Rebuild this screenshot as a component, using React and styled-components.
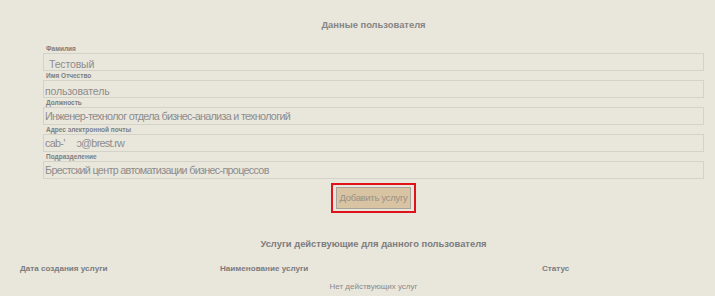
import React from "react";
import styled, { createGlobalStyle } from "styled-components";

const Global = createGlobalStyle`
  html, body { margin: 0; padding: 0; background: #e9e6dc; }
  body { font-family: "Liberation Sans", Arial, sans-serif; color: #8a8a8a; }
`;

const Page = styled.div`
  width: 715px;
  height: 296px;
  overflow: hidden;
  background: #e9e6dc;
`;

const Form = styled.div`
  margin-left: 43px;
  width: 661px;
  display: flex;
  flex-direction: column;
  padding-top: 19px;
`;

const Title = styled.div`
  text-align: center;
  font-weight: bold;
  font-size: 9.4px;
  line-height: 11px;
  color: #858585;
  margin-bottom: ${(p) => p.$mb || 0}px;
`;

const Field = styled.div`
  display: flex;
  flex-direction: column;
`;

const Label = styled.div`
  font-size: 6.5px;
  font-weight: bold;
  line-height: 9px;
  height: 9px;
  color: #7e7e7e;
  padding-left: 3px;
`;

const Input = styled.div`
  box-sizing: border-box;
  height: 18px;
  border: 1px solid #d5d2ca;
  background: #e9e6dc;
  font-size: ${(p) => (p.$big ? 10.8 : 10.5)}px;
  letter-spacing: ${(p) => (p.$big ? -0.7 : -0.15)}px;
  line-height: 16px;
  padding-left: ${(p) => p.$pad}px;
  padding-top: ${(p) => (p.$big ? 0 : 2)}px;
  color: #8d8d8d;
  white-space: pre;
`;

const ButtonRow = styled.div`
  display: flex;
  justify-content: center;
  margin-top: 4px;
`;

const Highlight = styled.div`
  border: 2px solid #e0121b;
  padding: 2px 3px;
  display: flex;
`;

const Button = styled.div`
  box-sizing: border-box;
  width: 75px;
  height: 22px;
  background: #d8c3a3;
  border: 1px solid #a8a49c;
  font-size: 9.5px;
  line-height: 20px;
  text-align: center;
  color: #9a9286;
  letter-spacing: -0.3px;
  white-space: nowrap;
`;

const Services = styled.div`
  margin-top: 25px;
  display: flex;
  flex-direction: column;
`;

const ServicesTitle = styled.div`
  margin-left: 43px;
  width: 661px;
  text-align: center;
  font-weight: bold;
  font-size: 9.4px;
  line-height: 11px;
  color: #7c7c7c;
`;

const Table = styled.div`
  display: grid;
  grid-template-columns: 200px 322px 1fr;
  padding-left: 20px;
  margin-top: 15px;
`;

const Th = styled.div`
  font-weight: bold;
  font-size: 8.1px;
  line-height: 10px;
  color: #7c7c7c;
`;

const Empty = styled.div`
  margin-left: 43px;
  width: 661px;
  text-align: center;
  font-size: 8px;
  line-height: 10px;
  margin-top: 8px;
  color: #8a8a8a;
`;

const fields = [
  { label: "Фамилия", value: "Тестовый", big: false, pad: 5 },
  { label: "Имя Отчество", value: "пользователь", big: false, pad: 1 },
  { label: "Должность", value: "Инженер-технолог отдела бизнес-анализа и технологий", big: true, pad: 1 },
  { label: "Адрес электронной почты", value: "cab-\u02BC     \u0254@brest.rw", big: true, pad: 1 },
  { label: "Подразделение", value: "Брестский центр автоматизации бизнес-процессов", big: true, pad: 1 },
];

export default function App() {
  return (
    <Page>
      <Global />
      <Form>
        <Title $mb={14}>Данные пользователя</Title>
        {fields.map((f) => (
          <Field key={f.label}>
            <Label>{f.label}</Label>
            <Input $big={f.big} $pad={f.pad}>{f.value}</Input>
          </Field>
        ))}
        <ButtonRow>
          <Highlight>
            <Button>Добавить услугу</Button>
          </Highlight>
        </ButtonRow>
      </Form>
      <Services>
        <ServicesTitle>Услуги действующие для данного пользователя</ServicesTitle>
        <Table>
          <Th>Дата создания услуги</Th>
          <Th>Наименование услуги</Th>
          <Th>Статус</Th>
        </Table>
        <Empty>Нет действующих услуг</Empty>
      </Services>
    </Page>
  );
}
